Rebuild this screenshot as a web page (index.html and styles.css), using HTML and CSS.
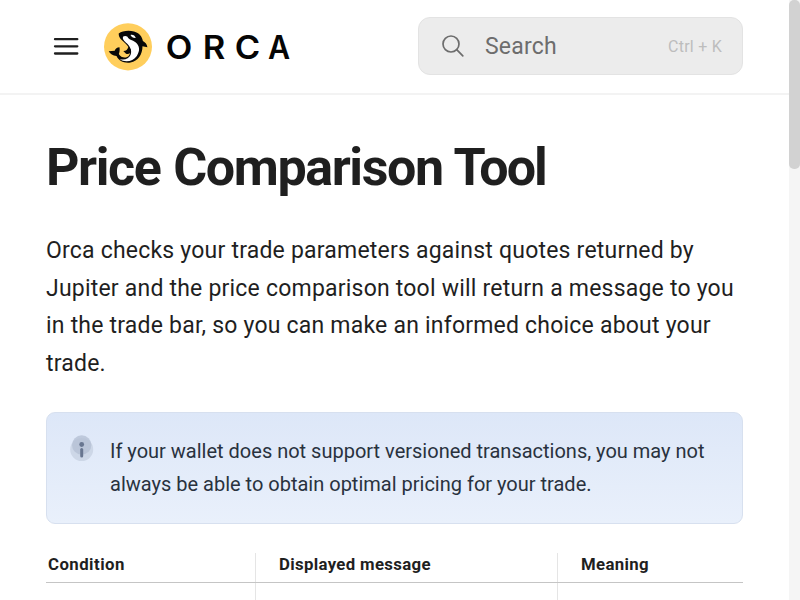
FILE: index.html
```html
<!DOCTYPE html>
<html lang="en">
<head>
<meta charset="utf-8">
<title>Price Comparison Tool</title>
<link rel="stylesheet" href="styles.css">
</head>
<body>
<div class="page">
  <header class="header">
    <svg class="menu" viewBox="0 0 26 20"><path d="M2 2.200H24.300M2 9.300H24.300M2 16.500H24.300"/></svg>
    <svg class="logo" viewBox="0 0 48 48">
      <ellipse cx="24" cy="23.8" rx="24" ry="23.6" fill="#ffce5c"/>
      <path d="M14.700 10.500C18 8 24 7 30 8.400C35.500 10 38.200 13.500 38.900 18C41.500 19.300 43 21.500 43.400 24.200L38.500 23.200C38.500 31.500 34 38 26.500 39.500C20.500 40.500 14.500 38 12.500 33C9 32.800 6 31 4.700 28.300L10.700 27.700C11.500 25.500 13 24.500 15.500 24.300C16 27 15.500 29.500 14.800 31C17 35 22.500 35.800 25 32.500C27.500 29 25.500 24.500 21.500 20.500C18 17 14.500 15 14.700 10.500Z" fill="#080808"/>
      <path d="M19.200 13.500C17.800 16 20.500 18.200 23 20.500C27 24.500 28 28.500 26.500 32C25 35.500 20.500 37.700 15.500 36C21 40 29 38.500 32.800 33C36.500 27 35.500 22.500 31.500 19.200C28.500 17 24.500 16.500 23.500 13.700C22.500 12.800 20.300 12.500 19.200 13.500Z" fill="#fff"/>
      <path d="M26.500 12C28.500 11.200 31 12.500 31.800 15C29.500 15.300 27.500 14.200 26.500 12Z" fill="#fff"/>
      <path d="M19.300 28.100C22 28.200 23.600 26.500 24.500 23.700L27 27C27 30 25 31.700 22 30.800Z" fill="#080808"/>
    </svg>
    <div class="brand"><span>O</span><span>R</span><span>C</span><span>A</span></div>
    <div class="search">
      <svg class="lens" viewBox="0 0 22 22"><circle cx="9" cy="9" r="8"/><path d="M14.700 14.700L20.800 20.800"/></svg>
      <span class="hint">Search</span><span class="keys">Ctrl + K</span>
    </div>
  </header>
  <main class="content">
    <h1>Price Comparison <span class="tight">Tool</span></h1>
    <p class="intro">Orca checks your trade parameters against quotes returned by<br>Jupiter and the price comparison tool will return a message to you<br>in the trade bar, so you can make an informed choice about your<br>trade.</p>
    <div class="note">
      <svg class="info" viewBox="0 0 24 26"><circle cx="11.700" cy="14.500" r="11.500" fill="#cdd7e7"/><circle cx="11.700" cy="10" r="9.700" fill="#b5c1d5" fill-opacity=".8"/><circle cx="11.700" cy="9.500" r="2.400" fill="#687690"/><path d="M11.700 14.600V21" stroke="#687690" stroke-width="3" stroke-linecap="round"/></svg>
      <p>If your wallet does not support versioned transactions, you may not<br>always be able to obtain optimal pricing for your trade.</p>
    </div>
    <table>
      <thead><tr><th>Condition</th><th>Displayed message</th><th>Meaning</th></tr></thead>
      <tbody><tr><td></td><td></td><td></td></tr></tbody>
    </table>
  </main>
</div>
<div class="track"><div class="thumb"></div></div>
</body>
</html>
```
FILE: styles.css
```css
* { box-sizing: border-box; }
body { margin: 0; height: 600px; display: flex; overflow: hidden; background: #fff; color: #1f1f1f; font-family: Roboto, sans-serif; }
.page { width: 789px; height: 600px; overflow: hidden; }
.header { height: 95px; padding: 17px 46px 0 53px; display: flex; align-items: flex-start; border-bottom: 2px solid #f3f3f3; }
.menu { width: 26px; height: 20px; margin-top: 20px; fill: none; stroke: #1f1f1f; stroke-width: 2.3; stroke-linecap: round; }
.logo { width: 48px; height: 48px; margin: 6px 0 0 25px; }
.brand { display: grid; grid-template-columns: 37px 32px 33px 24px; width: 126px; margin: 11px 0 0 14px; font: 600 32px/40px Inter, sans-serif; color: #050505; }
.brand span { justify-self: start; transform: scaleX(1.08); transform-origin: 2px 50%; }
.brand span:last-child { transform: scaleX(.95); }
.search { width: 325px; height: 58px; margin-left: auto; padding: 0 20px 0 23px; display: flex; align-items: center; background: #ececec; border: 1px solid #e3e3e3; border-radius: 12px; color: #6d6d6d; }
.lens { width: 22px; height: 22px; margin-right: 21px; fill: none; stroke: #6d6d6d; stroke-width: 1.7; stroke-linecap: round; }
.hint { font-size: 23px; letter-spacing: .2px; }
.keys { margin-left: auto; font-size: 16px; letter-spacing: .25px; color: #bdbdbd; }
.content { padding: 0 46px; }
h1 { margin: 43px 0 0; font-size: 52px; line-height: 60px; font-weight: 700; letter-spacing: -1.4px; word-spacing: 1.2px; white-space: nowrap; }
.tight { margin-left: -2px; letter-spacing: -2px; }
.intro { margin: 34px 0 0; font-size: 23px; line-height: 37.600px; letter-spacing: .21px; white-space: nowrap; }
.note { height: 112px; margin-top: 30px; padding: 22px 23px 20px; display: flex; border: 1px solid #d7e0ef; border-radius: 9px; background: linear-gradient(#dde7f8, #e9f0fb); color: #29323e; }
.info { width: 24px; height: 26px; margin-right: 16px; flex: none; }
.note p { margin: 0; font-size: 20px; line-height: 33px; white-space: nowrap; }
table { width: 697px; margin-top: 29px; border-collapse: collapse; table-layout: fixed; }
th { height: 29px; padding: 0 0 7px 23.500px; text-align: left; font-size: 16.800px; line-height: 22px; letter-spacing: .33px; border-bottom: 1px solid #c5c5c5; border-right: 1px solid #e5e5e5; }
th:first-child { width: 209px; padding-left: 2px; letter-spacing: .45px; }
th:nth-child(2) { width: 302px; }
td { height: 60px; border-right: 1px solid #e5e5e5; }
th:last-child, td:last-child { border-right: 0; }
.track { width: 11px; height: 600px; background: #f5f5f5; }
.thumb { width: 11px; height: 169px; border-radius: 5px; background: #d2d2d2; }
```
